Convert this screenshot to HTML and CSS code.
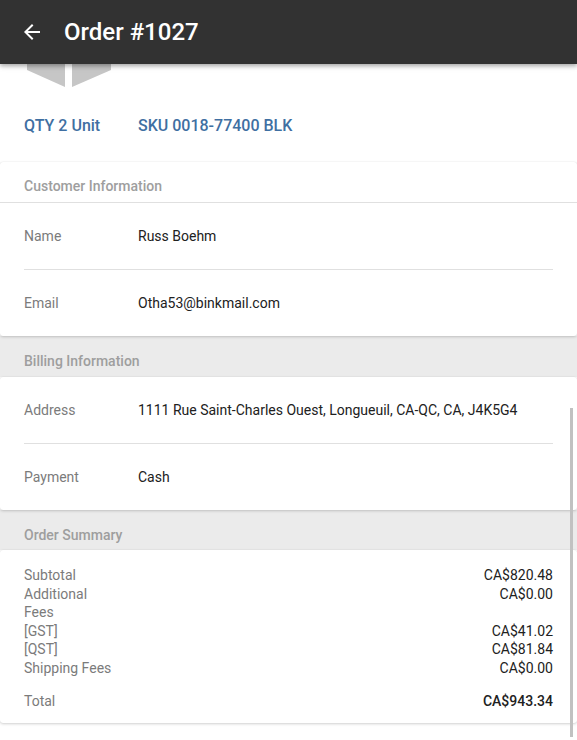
FILE: index.html
```html
<!DOCTYPE html>
<html lang="en">
<head>
<meta charset="utf-8">
<title>Order #1027</title>
<link rel="stylesheet" href="styles.css">
</head>
<body>
<div class="app">
  <header class="topbar">
    <svg class="back" viewBox="0 0 24 24" width="24" height="24"><path d="M20 11H7.83l5.59-5.59L12 4l-8 8 8 8 1.41-1.41L7.83 13H20v-2z" fill="#fff"/></svg>
    <h1 class="title">Order #1027</h1>
  </header>
  <main class="content">
    <section class="product">
      <svg class="thumb" viewBox="0 0 90 24" width="90" height="24">
        <polygon points="3,0 41,0 41,23 3,6" fill="#c6c6c6"/>
        <polygon points="48,0 87,0 87,6 48,23" fill="#c6c6c6"/>
      </svg>
      <div class="meta">
        <span class="qty">QTY 2 Unit</span>
        <span class="sku">SKU 0018-77400 BLK</span>
      </div>
    </section>

    <section class="card">
      <div class="card-head white">Customer Information</div>
      <div class="row"><span class="label">Name</span><span class="value">Russ Boehm</span></div>
      <div class="row"><span class="label">Email</span><span class="value">Otha53@binkmail.com</span></div>
    </section>

    <div class="band first">Billing Information</div>
    <section class="card">
      <div class="row"><span class="label">Address</span><span class="value">1111 Rue Saint-Charles Ouest, Longueuil, CA-QC, CA, J4K5G4</span></div>
      <div class="row"><span class="label">Payment</span><span class="value">Cash</span></div>
    </section>

    <div class="band">Order Summary</div>
    <section class="card summary">
      <div class="sline"><span class="slabel">Subtotal</span><span class="sval">CA$820.48</span></div>
      <div class="sline"><span class="slabel">Additional Fees</span><span class="sval">CA$0.00</span></div>
      <div class="sline"><span class="slabel">[GST]</span><span class="sval">CA$41.02</span></div>
      <div class="sline"><span class="slabel">[QST]</span><span class="sval">CA$81.84</span></div>
      <div class="sline"><span class="slabel">Shipping Fees</span><span class="sval">CA$0.00</span></div>
      <div class="sline total"><span class="slabel">Total</span><span class="sval">CA$943.34</span></div>
    </section>
  </main>
  <div class="scrollbar"></div>
</div>
</body>
</html>
```

FILE: styles.css
```css
* { box-sizing: border-box; }
html, body { margin: 0; padding: 0; }
body {
  font-family: Roboto, "Noto Sans", "Liberation Sans", sans-serif;
  font-size: 14px;
  color: #212121;
  background: #fff;
}
.app {
  position: relative;
  width: 577px;
  height: 740px;
  overflow: hidden;
}
.topbar {
  position: relative;
  z-index: 2;
  height: 64px;
  background: #323232;
  display: flex;
  align-items: center;
  padding-left: 20px;
  box-shadow: 0 2px 4px rgba(0,0,0,0.28), 0 1px 8px rgba(0,0,0,0.12);
}
.back { display: block; margin-right: 20px; }
.title {
  margin: 0;
  color: #fff;
  font-size: 24px;
  font-weight: 500;
  line-height: 32px;
}
.content { display: flex; flex-direction: column; }
.product {
  padding: 0 24px 24px;
}
.thumb { display: block; height: 24px; width: 90px; }
.meta {
  margin-top: 26px;
  display: flex;
  font-size: 16px;
  line-height: 24px;
  font-weight: 500;
  color: #3f6fa2;
}
.qty { width: 114px; }
.card {
  background: #fff;
  border-radius: 3px;
  box-shadow: 0 1px 3px rgba(0,0,0,0.18), 0 0 1px rgba(0,0,0,0.12);
  position: relative;
  z-index: 1;
}
.card-head, .band {
  height: 40px;
  padding: 16px 24px 0;
  line-height: 16px;
  font-size: 14px;
  font-weight: 500;
  color: #9e9e9e;
}
.card-head.white { border-bottom: 1px solid #e0e0e0; height: 41px; }
.band { background: #ebebeb; padding-top: 17px; }
.band.first { height: 41px; }
.row {
  margin: 0 24px;
  height: 66px;
  display: flex;
  align-items: center;
  line-height: 20px;
}
.row + .row { border-top: 1px solid #e0e0e0; height: 67px; }
.label { width: 114px; color: #7b7b7b; flex: none; }
.value { color: #212121; }
.summary {
  padding: 16px 24px 13px;
  line-height: 18.6px;
}
.sline { display: flex; justify-content: space-between; align-items: flex-start; }
.slabel { width: 90px; color: #7b7b7b; }
.sval { text-align: right; color: #212121; }
.total { margin-top: 14px; }
.total .sval { font-weight: 500; }
.scrollbar {
  position: absolute;
  right: 4px;
  top: 408px;
  bottom: 3px;
  width: 3px;
  background: #c1c1c1;
  z-index: 3;
}
```
